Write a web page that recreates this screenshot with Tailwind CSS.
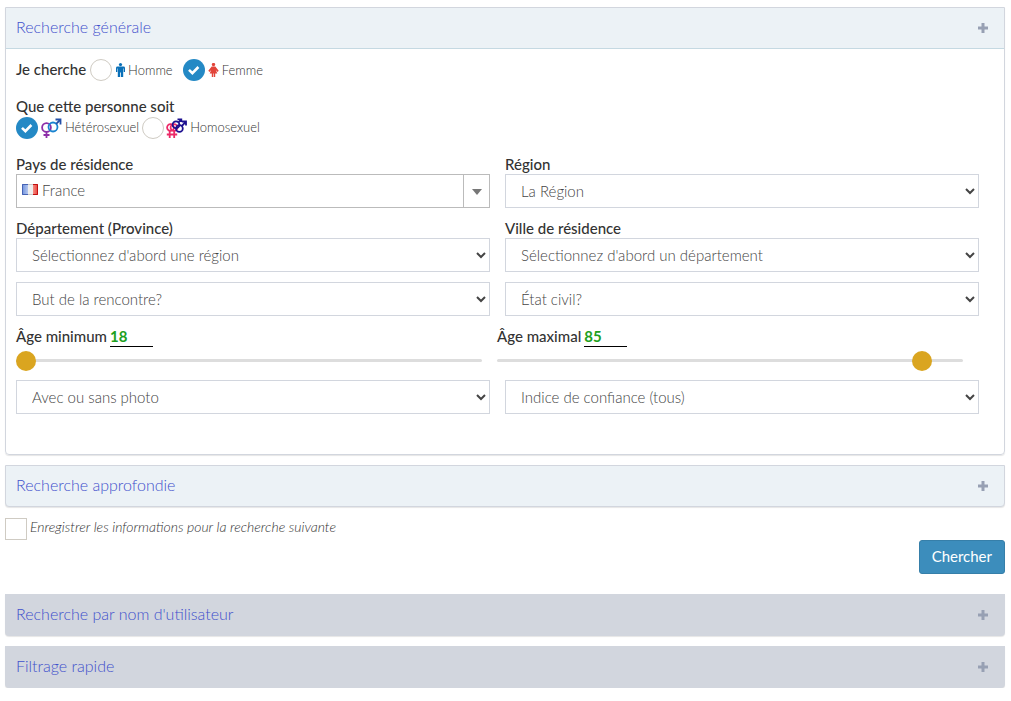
<!DOCTYPE html>
<html lang="fr">
<head>
<meta charset="utf-8">
<meta name="viewport" content="width=device-width, initial-scale=1">
<title>Recherche</title>
<script src="https://cdn.jsdelivr.net/npm/@tailwindcss/browser@4"></script>
</head>
<body class="bg-white pl-[5px] pr-[6px] pt-[7px] font-['Lato','Open_Sans',sans-serif] text-[15px] leading-5 text-[#333]">
<svg class="hidden" aria-hidden="true">
  <symbol id="plus" viewBox="0 0 10 10"><path d="M3.5 0h3v3.5H10v3H6.500V10h-3V6.500H0v-3h3.500z" fill="currentColor"/></symbol>
  <symbol id="tick" viewBox="0 0 22 22"><path d="M6 10.800l3.400 3.400 6-6.200" fill="none" stroke="#fff" stroke-width="2.600"/></symbol>
</svg>
<form>
  <section class="rounded-b border border-[#d2d6de] shadow-[0_1px_1px_rgba(0,0,0,0.1)]">
    <header class="flex h-[41px] items-center justify-between border-b border-[#c5d9e2] bg-[#ecf2f6] pl-[10px] pr-4">
      <h2 class="pb-[2px] text-base font-light text-[#3f50cc]">Recherche générale</h2>
      <button type="button" aria-label="Ouvrir" class="pb-px text-[#97a0b3]"><svg class="size-[10px]"><use href="#plus"/></svg></button>
    </header>
    <div class="px-[10px] pb-10 pt-[10px]">
      <div class="flex h-[22px] items-center">
        <span class="mr-1 pb-[2px] font-medium">Je cherche</span>
        <label class="flex items-center text-[13px] font-light">
          <input type="radio" name="sexe" class="size-[22px] appearance-none rounded-full border border-[#cfcbc3]">
          <svg class="ml-1 mr-[3px] mb-px h-[14px] w-[9px]" viewBox="0 0 9 14"><g fill="#0a70b8"><circle cx="4.500" cy="1.600" r="1.600"/><path d="M1.500 3.600h6Q9 3.600 9 5v4H7.700V5.500H7.200V14H4.900V9.500H4.100V14H1.800V5.500H1.300V9H0V5Q0 3.600 1.500 3.600z"/></g></svg>
          <span class="pb-px">Homme</span>
        </label>
        <label class="ml-[10px] flex items-center text-[13px] font-light">
          <span class="grid">
            <input type="radio" name="sexe" checked class="col-start-1 row-start-1 size-[22px] appearance-none rounded-full bg-[#2489c5]">
            <svg class="pointer-events-none col-start-1 row-start-1 size-[22px]"><use href="#tick"/></svg>
          </span>
          <svg class="ml-[3px] mr-[3px] mb-px h-[14px] w-[11px]" viewBox="0 0 10 14"><g fill="#e2443a"><circle cx="5" cy="1.600" r="1.700"/><path d="M3.200 3.400h3.600L10.200 7.700 9 8.900 7.300 7 8.800 10.600H6.700V14H5.300V10.600H4.700V14H3.300V10.600H1.200L2.700 7 1 8.900 -.2 7.700z"/></g></svg>
          <span class="pb-px">Femme</span>
        </label>
      </div>
      <p class="mt-[15px] font-medium">Que cette personne soit</p>
      <div class="mt-px flex h-[22px] items-center">
        <label class="flex items-center text-[13px] font-light">
          <span class="grid">
            <input type="radio" name="orientation" checked class="col-start-1 row-start-1 size-[22px] appearance-none rounded-full bg-[#2489c5]">
            <svg class="pointer-events-none col-start-1 row-start-1 size-[22px]"><use href="#tick"/></svg>
          </span>
          <svg class="ml-[3px] mr-[3px] h-5 w-[21px]" viewBox="0 0 21 20" fill="none" stroke-width="1.800"><path d="M5.500 14v6M2.500 17h6" stroke="#8d2fa8"/><circle cx="5.500" cy="9.500" r="4.400" stroke="#8d2fa8"/><circle cx="12" cy="9" r="4.500" stroke="#1a84d0"/><path d="M15.200 5.800L19 2" stroke="#2450a8"/><path d="M14.500 1.500H19.500V6.500" stroke="#2450a8"/></svg>
          <span class="pb-[3px]">Hétérosexuel</span>
        </label>
        <label class="ml-[3px] flex items-center text-[13px] font-light">
          <input type="radio" name="orientation" class="size-[22px] appearance-none rounded-full border border-[#cfcbc3]">
          <svg class="ml-[2px] mr-[3px] h-5 w-[21px]" viewBox="0 0 21 20" fill="none" stroke-width="1.800"><g stroke="#ec2a68"><circle cx="4.500" cy="9.500" r="3.400"/><circle cx="8" cy="9.500" r="3.400"/><path d="M3.700 13v7M8.200 13v7M0.800 16.500h10.400"/></g><g stroke="#1c0f90"><circle cx="10" cy="6.800" r="3.400"/><circle cx="13.400" cy="10.500" r="3.400"/><path d="M12.500 4.400L15 2M11.500 1.300h3.800V4M15.800 8L19.500 4.200M15.800 3.500h4.200V7.500"/></g></svg>
          <span class="pb-[3px]">Homosexuel</span>
        </label>
      </div>

      <div class="mt-[15px] grid grid-cols-2">
        <div class="pr-[15px]">
          <label for="pays" class="block font-medium">Pays de résidence</label>
          <button id="pays" type="button" class="flex h-[34px] w-full border border-[#bbb] text-left font-light text-[#444]">
            <span class="flex flex-1 items-center self-stretch pb-[3px] pl-[5px]">
              <svg class="mr-1 h-[11px] w-4" viewBox="0 0 16 11"><defs><linearGradient id="bleu"><stop offset="0" stop-color="#6d90dd"/><stop offset="1" stop-color="#b4c6ee"/></linearGradient><linearGradient id="rouge"><stop offset="0" stop-color="#f58a80"/><stop offset="1" stop-color="#e8403a"/></linearGradient></defs><path fill="url(#bleu)" d="M0 0h6v11H0z"/><path fill="#eee" d="M6 0h5v11H6z"/><path fill="url(#rouge)" d="M11 0h5v11h-5z"/><path fill="none" stroke="#4663b4" d="M6 .5H.5v10H6"/><path fill="none" stroke="#c9c9c9" d="M6 .5h5M6 10.500h5"/><path fill="none" stroke="#c01010" d="M11 .5h4.500v10H11"/></svg>
              France
            </span>
            <span class="flex w-[26px] items-center justify-center self-stretch border-l border-[#bbb]"><svg class="mt-px h-[6px] w-[10px]" viewBox="0 0 10 6"><path fill="#777" d="M0 0h10L5 6z"/></svg></span>
          </button>
        </div>
        <div class="pr-[15px]">
          <label for="region" class="block font-medium">Région</label>
          <select id="region" class="h-[34px] w-full border border-[#d2d6de] bg-white px-[11px] pb-px font-light text-[#444]"><option>La Région</option></select>
        </div>
        <div class="mt-[10px] pr-[15px]">
          <label for="dep" class="block font-medium">Département (Province)</label>
          <select id="dep" class="h-[34px] w-full border border-[#d2d6de] bg-white px-[11px] pb-px font-light text-[#444]"><option>Sélectionnez d'abord une région</option></select>
        </div>
        <div class="mt-[10px] pr-[15px]">
          <label for="ville" class="block font-medium">Ville de résidence</label>
          <select id="ville" class="h-[34px] w-full border border-[#d2d6de] bg-white px-[11px] pb-px font-light text-[#444]"><option>Sélectionnez d'abord un département</option></select>
        </div>
        <div class="mt-[10px] pr-[15px]">
          <select aria-label="But de la rencontre" class="h-[34px] w-full border border-[#d2d6de] bg-white px-[11px] pb-px font-light text-[#444]"><option>But de la rencontre?</option></select>
        </div>
        <div class="mt-[10px] pr-[15px]">
          <select aria-label="État civil" class="h-[34px] w-full border border-[#d2d6de] bg-white px-[11px] pb-px font-light text-[#444]"><option>État civil?</option></select>
        </div>
      </div>

      <div class="mt-[10px] grid grid-cols-2 pr-4">
        <div class="pr-[15px]">
          <div class="flex h-[21px] items-stretch font-medium">
            <label for="amin" class="mr-[3px]">Âge minimum</label>
            <input aria-label="Valeur de l'âge minimum" value="18" class="w-[43px] border-b border-black font-bold text-[#20a020] outline-none">
          </div>
          <input id="amin" type="range" min="18" max="90" value="18" class="mt-[3px] block h-5 w-full appearance-none bg-transparent [&::-webkit-slider-runnable-track]:h-[3px] [&::-webkit-slider-runnable-track]:rounded-sm [&::-webkit-slider-runnable-track]:bg-[#ddd] [&::-webkit-slider-thumb]:-mt-2 [&::-webkit-slider-thumb]:size-5 [&::-webkit-slider-thumb]:appearance-none [&::-webkit-slider-thumb]:rounded-full [&::-webkit-slider-thumb]:bg-[#daa520]">
        </div>
        <div class="pr-[15px]">
          <div class="flex h-[21px] items-stretch font-medium">
            <label for="amax" class="mr-[3px]">Âge maximal</label>
            <input aria-label="Valeur de l'âge maximal" value="85" class="w-[43px] border-b border-black font-bold text-[#20a020] outline-none">
          </div>
          <input id="amax" type="range" min="18" max="90" value="85" class="mt-[3px] block h-5 w-full appearance-none bg-transparent [&::-webkit-slider-runnable-track]:h-[3px] [&::-webkit-slider-runnable-track]:rounded-sm [&::-webkit-slider-runnable-track]:bg-[#ddd] [&::-webkit-slider-thumb]:-mt-2 [&::-webkit-slider-thumb]:size-5 [&::-webkit-slider-thumb]:appearance-none [&::-webkit-slider-thumb]:rounded-full [&::-webkit-slider-thumb]:bg-[#daa520]">
        </div>
      </div>

      <div class="mt-[10px] grid grid-cols-2">
        <div class="pr-[15px]"><select aria-label="Photo" class="h-[34px] w-full border border-[#d2d6de] bg-white px-[11px] pb-px font-light text-[#444]"><option>Avec ou sans photo</option></select></div>
        <div class="pr-[15px]"><select aria-label="Indice de confiance" class="h-[34px] w-full border border-[#d2d6de] bg-white px-[11px] pb-px font-light text-[#444]"><option>Indice de confiance (tous)</option></select></div>
      </div>
    </div>
  </section>

  <section class="mt-[10px] flex h-[42px] items-center justify-between rounded-b border border-[#d2d6de] bg-[#ecf2f6] pl-[10px] pr-4 shadow-[0_1px_1px_rgba(0,0,0,0.1)]">
    <h2 class="pb-[2px] text-base font-light text-[#3f50cc]">Recherche approfondie</h2>
    <button type="button" aria-label="Ouvrir" class="pb-px text-[#97a0b3]"><svg class="size-[10px]"><use href="#plus"/></svg></button>
  </section>

  <label class="mt-[11px] flex h-[22px] items-start gap-[3px] text-sm/[18px] font-light italic">
    <input type="checkbox" class="size-[22px] appearance-none border border-[#cfcbc3]">
    Enregistrer les informations pour la recherche suivante
  </label>
  <div class="flex justify-end">
    <button class="h-[34px] rounded-[3px] border border-[#367fa9] bg-[#3c8dbc] px-3 pb-[2px] text-white">Chercher</button>
  </div>
</form>

<section class="mt-5 flex h-[42px] items-center justify-between rounded-b bg-[#d2d6de] pl-[11px] pr-[17px] shadow-[0_1px_1px_rgba(0,0,0,0.1)]">
  <h2 class="pb-[2px] text-base font-light text-[#3f50cc]">Recherche par nom d'utilisateur</h2>
  <button type="button" aria-label="Ouvrir" class="pb-px text-[#97a0b3]"><svg class="size-[10px]"><use href="#plus"/></svg></button>
</section>
<section class="mt-[10px] flex h-[42px] items-center justify-between rounded-b bg-[#d2d6de] pl-[11px] pr-[17px] shadow-[0_1px_1px_rgba(0,0,0,0.1)]">
  <h2 class="pb-[2px] text-base font-light text-[#3f50cc]">Filtrage rapide</h2>
  <button type="button" aria-label="Ouvrir" class="pb-px text-[#97a0b3]"><svg class="size-[10px]"><use href="#plus"/></svg></button>
</section>
</body>
</html>
